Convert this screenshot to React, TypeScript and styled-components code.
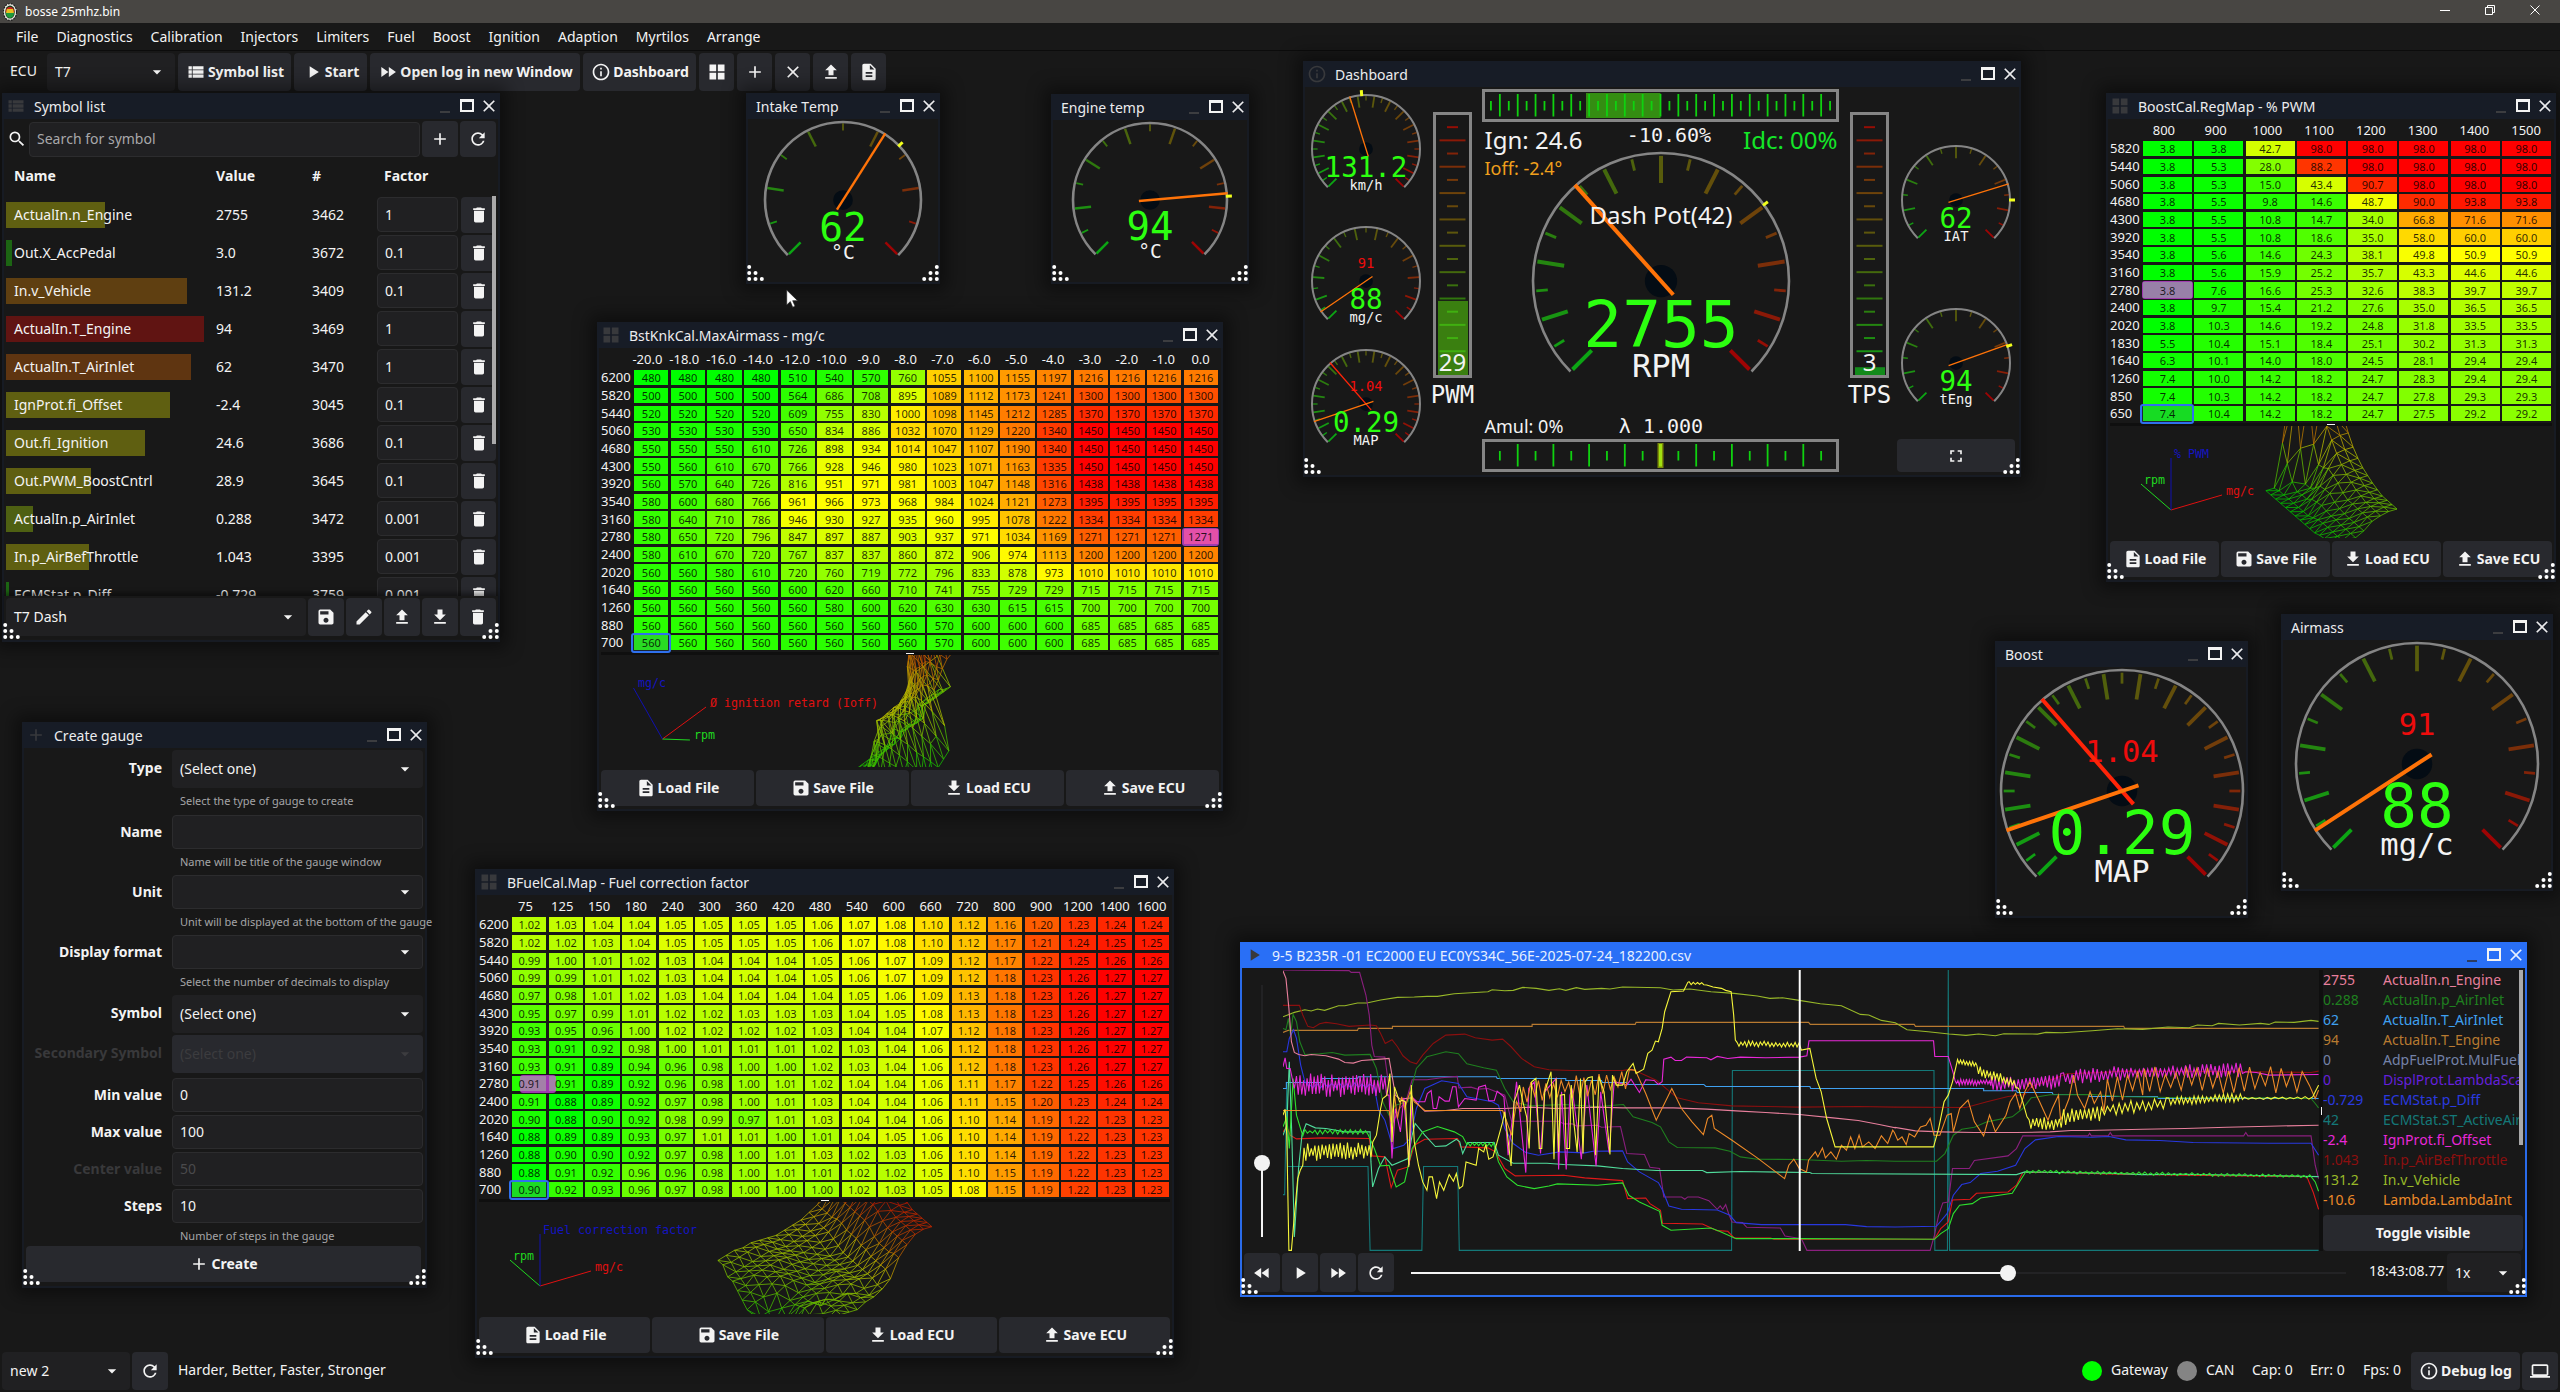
import React from 'react';
import styled, { createGlobalStyle, css } from 'styled-components';
import {
  MdAdd, MdArrowDropDown, MdClose, MdDelete, MdDescription, MdDownload, MdEdit,
  MdFastForward, MdFastRewind, MdFullscreen, MdInfoOutline, MdLaptop, MdPlayArrow,
  MdRefresh, MdSave, MdSearch, MdUpload, MdViewList,
} from 'react-icons/md';

const SANS = '"Noto Sans", "Open Sans", sans-serif';
const MONO = '"DejaVu Sans Mono", "Liberation Mono", monospace';

const Global = createGlobalStyle`
  * { box-sizing: border-box; }
  html, body { margin: 0; padding: 0; background: #181818; overflow: hidden; }
  body { font-family: ${SANS}; font-size: 14px; line-height: 1; color: #f3f3f3; font-kerning: none; }
  svg { display: block; flex: none; }
`;

/* ---------- shell ---------- */

const Page = styled.div`
  width: 2560px;
  height: 1392px;
  display: flex;
  flex-direction: column;
  background: #181818;
  overflow: hidden;
  white-space: nowrap;
`;

const OsBar = styled.header`
  height: 23px;
  flex: none;
  display: flex;
  align-items: center;
  padding: 0 19px 0 3px;
  background: #484643;
  font-size: 12px;
  color: #fff;
`;
const OsTitle = styled.span`
  margin-left: 8px;
  flex: 1;
`;
const OsButtons = styled.div`
  display: flex;
  gap: 33px;
  margin-top: -3px;
`;

const MenuBar = styled.nav`
  height: 28px;
  flex: none;
  display: flex;
  align-items: center;
  gap: 18px;
  padding: 0 16px;
  border-bottom: 1px solid #0c0c0c;
`;

const ToolBar = styled.div`
  height: 41px;
  flex: none;
  display: flex;
  align-items: center;
  gap: 3px;
  padding: 0 10px;
`;
const ToolLabel = styled.span`
  width: 34px;
  padding-bottom: 2px;
`;

const Desktop = styled.main`
  position: relative;
  flex: 1;
`;

const StatusBar = styled.footer`
  height: 41px;
  flex: none;
  display: flex;
  align-items: center;
  gap: 2px;
  padding: 0 2px 2px;
`;
const StatusText = styled.span<{ $w?: number; $tight?: boolean }>`
  padding: 0 0 1px ${p => (p.$tight ? 7 : 8)}px;
  ${p => p.$w ? css`width: ${p.$w}px;` : ''}
`;
const Spacer = styled.div`
  flex: 1;
`;
const Lamp = styled.i<{ $on?: boolean }>`
  width: 20px;
  height: 20px;
  border-radius: 50%;
  background: ${p => (p.$on ? '#00ff00' : '#848484')};
`;

/* ---------- controls ---------- */

const Button = styled.button<{ $w?: number; $h?: number; $grow?: boolean }>`
  display: flex;
  align-items: center;
  justify-content: center;
  gap: 2px;
  ${p => (p.$grow ? 'flex: 1 1 0;' : `flex: none; width: ${p.$w ?? 36}px;`)}
  height: ${p => p.$h ?? 38}px;
  padding: 0;
  border: 0;
  border-radius: 4px;
  background: #28292e;
  color: #f3f3f3;
  font: 700 14px/1 ${SANS};
`;
const ToolButton = styled(Button)`
  padding-left: 1px;
`;

const SelectBox = styled.div<{ $w?: number; $h?: number; $disabled?: boolean }>`
  display: flex;
  align-items: center;
  justify-content: space-between;
  width: ${p => (p.$w ? `${p.$w}px` : '100%')};
  height: ${p => p.$h ?? 38}px;
  padding: 0 8px;
  border-radius: 4px;
  background: ${p => (p.$disabled ? '#28292e' : '#202022')};
  color: ${p => (p.$disabled ? '#3c3c3f' : '#f3f3f3')};
`;

const EntryBox = styled.div<{ $w?: number; $h?: number; $muted?: string }>`
  display: flex;
  align-items: center;
  justify-content: space-between;
  width: ${p => (p.$w ? `${p.$w}px` : '100%')};
  height: ${p => p.$h ?? 33}px;
  padding: 0 7px;
  border: 1px solid #2c2c2e;
  border-radius: 4px;
  background: #202022;
  color: ${p => p.$muted ?? '#f3f3f3'};
`;

const Select = ({ value, w, h, disabled }: { value: string; w?: number; h?: number; disabled?: boolean }) => (
  <SelectBox $w={w} $h={h} $disabled={disabled}>
    <span>{value}</span>
    <MdArrowDropDown size={20} />
  </SelectBox>
);

const GridIcon = ({ size = 20 }: { size?: number }) => (
  <svg width={size} height={size} viewBox="0 0 24 24" fill="currentColor">
    <path d="M3 3h8v8H3zM13 3h8v8h-8zM3 13h8v8H3zM13 13h8v8h-8z" />
  </svg>
);

/* ---------- inner windows ---------- */

const Frame = styled.section<{ $x: number; $y: number; $w: number; $h: number; $active?: boolean }>`
  position: absolute;
  left: ${p => p.$x}px;
  top: ${p => p.$y - 92}px;
  width: ${p => p.$w}px;
  height: ${p => p.$h}px;
  display: flex;
  flex-direction: column;
  border: 2px solid ${p => (p.$active ? '#2a6bea' : '#171b23')};
  border-top: 0;
  background: #181818;
  box-shadow: 0 0 16px 7px rgba(0, 0, 0, 0.42);
`;
const TitleBar = styled.div<{ $active?: boolean; $icon?: boolean }>`
  height: 26px;
  flex: none;
  display: flex;
  align-items: center;
  margin: 0 -2px;
  padding: 0 0 0 ${p => (p.$icon ? 3 : 10)}px;
  background: ${p => (p.$active ? '#296ff6' : '#171c26')};
  color: ${p => (p.$active ? '#e6efff' : '#ececee')};
`;
const TitleIcon = styled.span`
  width: 29px;
  padding-left: 1px;
  color: #38393c;
`;
const TitleText = styled.span`
  padding-top: 2px;
`;
const WinButtons = styled.div`
  margin-left: auto;
  display: flex;
  align-items: center;
  width: 65px;
`;
const MinMark = styled.i<{ $active?: boolean }>`
  width: 10px;
  height: 2px;
  margin: 11px 10px 0 5px;
  background: ${p => (p.$active ? '#2b3b60' : '#3c3d40')};
`;
const MaxMark = styled.i`
  width: 14px;
  height: 13px;
  margin: 0 5px 1px 0;
  border: 2px solid #f3f3f3;
  border-top-width: 3px;
`;
const Body = styled.div`
  flex: 1;
  min-height: 0;
  display: flex;
  flex-direction: column;
`;
const GripBox = styled.div<{ $side: 'left' | 'right' }>`
  position: absolute;
  bottom: 0;
  ${p => p.$side}: -1px;
  pointer-events: none;
`;

const Grip = ({ side }: { side: 'left' | 'right' }) => {
  const dots = [[0, 0], [0, 1], [1, 1], [0, 2], [1, 2], [2, 2]];
  return (
    <GripBox $side={side}>
      <svg width="18" height="18" viewBox="0 0 18 18" fill="#fff">
        {dots.map(([cx, cy]) => (
          <circle key={`${cx}${cy}`} cx={side === 'left' ? 2.2 + cx * 6.3 : 15.8 - cx * 6.3} cy={3 + cy * 6} r="2" />
        ))}
      </svg>
    </GripBox>
  );
};

type WinProps = {
  x: number; y: number; w: number; h: number; title: string;
  icon?: React.ReactNode; active?: boolean; children: React.ReactNode;
};
const Win = ({ x, y, w, h, title, icon, active, children }: WinProps) => (
  <Frame $x={x} $y={y} $w={w} $h={h} $active={active}>
    <TitleBar $active={active} $icon={!!icon}>
      {icon && <TitleIcon>{icon}</TitleIcon>}
      <TitleText>{title}</TitleText>
      <WinButtons>
        <MinMark $active={active} />
        <MaxMark />
        <MdClose size={20} />
      </WinButtons>
    </TitleBar>
    <Body>{children}</Body>
    <Grip side="left" />
    <Grip side="right" />
  </Frame>
);

/* ---------- symbol list ---------- */

const SearchRow = styled.div`
  display: flex;
  align-items: center;
  gap: 2px;
  padding: 2px 2px 0;
  height: 38px;
`;
const SearchIcon = styled.span`
  width: 21px;
  padding-left: 1px;
`;
const SymHead = styled.div`
  display: grid;
  grid-template-columns: 202px 96px 72px 1fr;
  padding-left: 10px;
  height: 38.5px;
  align-items: center;
  font-weight: 700;
`;
const SymRows = styled.div`
  position: relative;
  height: 400px;
  overflow: hidden;
  padding: 0 2px;
`;
const SymRow = styled.div`
  position: relative;
  display: grid;
  grid-template-columns: 202px 96px 65px 84px 35px;
  align-items: center;
  height: 38px;
  padding-left: 8px;
`;
const SymBar = styled.i<{ $w: number; $c: string }>`
  position: absolute;
  left: 0;
  top: 6.5px;
  height: 26px;
  width: ${p => p.$w}px;
  background: ${p => p.$c};
`;
const SymText = styled.span`
  position: relative;
`;
const ScrollThumb = styled.i<{ $h: number; $r: number }>`
  position: absolute;
  right: ${p => p.$r}px;
  top: 0;
  width: 4px;
  height: ${p => p.$h}px;
  background: #a9a9aa;
`;
const BottomRow = styled.div`
  display: flex;
  gap: 2px;
  padding: 2.5px 2px 0;
  box-shadow: 0 -3px 5px rgba(0, 0, 0, 0.45);
  position: relative;
`;

const SYMBOLS: [string, string, string, string, number, string][] = [
  ['ActualIn.n_Engine', '2755', '3462', '1', 99, '#5f5f11'],
  ['Out.X_AccPedal', '3.0', '3672', '0.1', 6, '#1c6513'],
  ['In.v_Vehicle', '131.2', '3409', '0.1', 181, '#5f3f11'],
  ['ActualIn.T_Engine', '94', '3469', '1', 198, '#601412'],
  ['ActualIn.T_AirInlet', '62', '3470', '1', 185, '#5f3511'],
  ['IgnProt.fi_Offset', '-2.4', '3045', '0.1', 164, '#5f5f11'],
  ['Out.fi_Ignition', '24.6', '3686', '0.1', 139, '#5f5f11'],
  ['Out.PWM_BoostCntrl', '28.9', '3645', '0.1', 85, '#5f5f11'],
  ['ActualIn.p_AirInlet', '0.288', '3472', '0.001', 27, '#4e6012'],
  ['In.p_AirBefThrottle', '1.043', '3395', '0.001', 83, '#5f5f11'],
  ['ECMStat.p_Diff', '-0.729', '3759', '0.001', 3, '#1c6513'],
];

const SymbolList = () => (
  <Win x={2} y={93} w={498} h={549} title="Symbol list" icon={<MdViewList size={20} />}>
    <SearchRow>
      <SearchIcon><MdSearch size={20} /></SearchIcon>
      <EntryBox $w={391} $muted="#a8a8aa" $h={35}>Search for symbol</EntryBox>
      <Button $h={36}><MdAdd size={20} /></Button>
      <Button $h={36}><MdRefresh size={20} /></Button>
    </SearchRow>
    <SymHead><span>Name</span><span>Value</span><span>#</span><span>Factor</span></SymHead>
    <SymRows>
      {SYMBOLS.map(([name, value, id, factor, w, c]) => (
        <SymRow key={name}>
          <SymBar $w={w} $c={c} />
          <SymText>{name}</SymText>
          <span>{value}</span>
          <span>{id}</span>
          <EntryBox $w={81} $h={35}>{factor}</EntryBox>
          <Button $w={35} $h={36}><MdDelete size={20} /></Button>
        </SymRow>
      ))}
      <ScrollThumb $h={248} $r={2} />
    </SymRows>
    <BottomRow>
      <Select value="T7 Dash" w={300} h={38} />
      <Button $h={38}><MdSave size={20} /></Button>
      <Button $h={38}><MdEdit size={20} /></Button>
      <Button $h={38}><MdUpload size={20} /></Button>
      <Button $h={38}><MdDownload size={20} /></Button>
      <Button $h={38}><MdDelete size={20} /></Button>
    </BottomRow>
  </Win>
);

/* ---------- create gauge ---------- */

const Form = styled.div`
  display: flex;
  flex-direction: column;
  padding: 2px 3px 0 2px;
`;
const FieldRow = styled.div<{ $h: number; $off?: boolean }>`
  display: grid;
  grid-template-columns: 146px 251px;
  height: ${p => p.$h}px;
  align-items: start;
  color: ${p => (p.$off ? '#39393b' : '#f3f3f3')};
`;
const FieldLabel = styled.label<{ $h: number }>`
  height: ${p => p.$h - 2}px;
  display: flex;
  align-items: center;
  justify-content: flex-end;
  padding-right: 10px;
  font-weight: 700;
`;
const Hint = styled.div`
  height: 24px;
  display: flex;
  align-items: center;
  padding: 0 0 0 8px;
  font-size: 11px;
  color: #a5a5a7;
`;
const CreateWrap = styled.div`
  display: flex;
  padding: 0 4px 0 2px;
`;

type Field = { label: string; kind: 'select' | 'combo' | 'entry'; value?: string; hint?: string; off?: boolean; row: number };
const FIELDS: Field[] = [
  { label: 'Type', kind: 'select', value: '(Select one)', hint: 'Select the type of gauge to create', row: 65 },
  { label: 'Name', kind: 'entry', hint: 'Name will be title of the gauge window', row: 60 },
  { label: 'Unit', kind: 'combo', hint: 'Unit will be displayed at the bottom of the gauge', row: 60 },
  { label: 'Display format', kind: 'combo', hint: 'Select the number of decimals to display', row: 60 },
  { label: 'Symbol', kind: 'select', value: '(Select one)', row: 40 },
  { label: 'Secondary Symbol', kind: 'select', value: '(Select one)', off: true, row: 43 },
  { label: 'Min value', kind: 'entry', value: '0', row: 37 },
  { label: 'Max value', kind: 'entry', value: '100', row: 37 },
  { label: 'Center value', kind: 'entry', value: '50', off: true, row: 37 },
  { label: 'Steps', kind: 'entry', value: '10', hint: 'Number of steps in the gauge', row: 57 },
];

const CreateGauge = () => (
  <Win x={22} y={722} w={405} h={566} title="Create gauge" icon={<MdAdd size={20} />}>
    <Form>
      {FIELDS.map(f => (
        <FieldRow key={f.label} $h={f.row} $off={f.off}>
          <FieldLabel $h={f.kind === 'select' ? 38 : 35}>{f.label}</FieldLabel>
          <div>
            {f.kind === 'select'
              ? <Select value={f.value ?? ''} disabled={f.off} />
              : (
                <EntryBox $h={34} $muted={f.off ? '#4a4a4c' : undefined}>
                  <span>{f.value}</span>
                  {f.kind === 'combo' && <MdArrowDropDown size={20} />}
                </EntryBox>
              )}
            {f.hint && <Hint>{f.hint}</Hint>}
          </div>
        </FieldRow>
      ))}
    </Form>
    <CreateWrap>
      <Button $grow $h={36}><MdAdd size={20} />Create</Button>
    </CreateWrap>
  </Win>
);

/* ---------- gauges ---------- */

const lerp = (a: number, b: number, t: number) => a + (b - a) * t;

const DIAL_STOPS: [number, number[]][] = [
  [0, [12, 165, 20]], [0.3, [48, 118, 14]], [0.5, [88, 92, 12]], [0.72, [112, 64, 10]], [0.85, [130, 35, 8]], [1, [158, 4, 4]],
];
const dialColor = (t: number) => {
  for (let i = 1; i < DIAL_STOPS.length; i++) {
    const [t1, c1] = DIAL_STOPS[i];
    const [t0, c0] = DIAL_STOPS[i - 1];
    if (t <= t1) {
      const k = (t - t0) / (t1 - t0);
      return `rgb(${c0.map((c, n) => Math.round(lerp(c, c1[n], k))).join(',')})`;
    }
  }
  return 'rgb(158,4,4)';
};

type DialProps = {
  r: number; steps: number; frac: number; value: string; unit: string;
  peak?: number; frac2?: number; value2?: string; needle?: number;
};

const DialSvg = styled.svg`
  overflow: visible;
  font-family: ${MONO};
  text-anchor: middle;
`;

const Dial = ({ r, steps, frac, value, unit, peak, frac2, value2, needle }: DialProps) => {
  const c = r + 3;
  const at = (f: number, rad: number) => {
    const a = ((f * 270 - 135) * Math.PI) / 180;
    return [c + Math.sin(a) * rad, c - Math.cos(a) * rad];
  };
  const line = (f: number, r0: number, r1: number) => {
    const [x1, y1] = at(f, r0);
    const [x2, y2] = at(f, r1);
    return { x1, y1, x2, y2 };
  };
  const [sx, sy] = at(0, r - 1);
  const [ex, ey] = at(1, r - 1);
  const nw = needle ?? (r > 100 ? 4 : r > 60 ? 2.4 : 1.3);
  return (
    <DialSvg width={c * 2} height={c * 2}>
      <circle cx={c} cy={c} r={r / 8} fill="#040c14" />
      {Array.from({ length: steps + 1 }, (_, i) => (
        <line
          key={i}
          {...line(i / steps, r * 0.97, i % 2 ? r * 0.88 : r * 0.76)}
          stroke={dialColor(i / steps)}
          strokeWidth={i % 2 ? r / 48 + 0.2 : r / 34 + 0.2}
        />
      ))}
      <path d={`M${sx} ${sy}A${r - 1} ${r - 1} 0 1 1 ${ex} ${ey}`} fill="none" stroke="#858585" strokeWidth={r > 70 ? 2.6 : 2} />
      {value2 && <text x={c} y={c - r * 0.24} fontSize={r / 4} fill="#ee0c0c">{value2}</text>}
      {frac2 !== undefined && <line {...line(frac2, -r / 7, r)} stroke="#ff2408" strokeWidth={nw} />}
      <line {...line(frac, -r / 7, r)} stroke="#ff7308" strokeWidth={nw} />
      {peak !== undefined && <line {...line(peak, r - 2, r + 4)} stroke="#f2ff1c" strokeWidth={3} />}
      <text x={c} y={c + r * 0.515} fontSize={r / 2} fill="#2cff10">{value}</text>
      <text x={c} y={c + r * 0.742} fontSize={r / 4} fill="#f3f3f3">{unit}</text>
    </DialSvg>
  );
};

const DialBody = styled.div`
  display: flex;
  justify-content: center;
  margin-top: -1px;
`;
const GaugeWin = ({ x, y, w, h, title, ...dial }: DialProps & { x: number; y: number; w: number; h: number; title: string }) => (
  <Win x={x} y={y} w={w} h={h} title={title}>
    <DialBody><Dial {...dial} /></DialBody>
  </Win>
);

/* ---------- dashboard ---------- */

const Dash = styled.div`
  display: flex;
  align-items: flex-start;
`;
const DialColumn = styled.div<{ $left: number }>`
  display: flex;
  flex-direction: column;
  margin-left: ${p => p.$left}px;
`;
const DialSlot = styled.div<{ $gap: number }>`
  margin-top: ${p => p.$gap}px;
`;
const BarColumn = styled.div<{ $left: number }>`
  margin: 25px 0 0 ${p => p.$left}px;
  width: 39px;
`;
const CenterColumn = styled.div<{ $left: number }>`
  width: 357px;
  margin: 2px 0 0 ${p => p.$left}px;
`;
const Stage = styled.div`
  position: relative;
  height: 317px;
  padding: 27px 0 0 46.5px;
`;
const Readout = styled.span<{ $x: number; $y: number; $size: number; $c?: string; $mono?: boolean; $anchor?: 'l' | 'c' | 'r' }>`
  position: absolute;
  left: ${p => p.$x}px;
  top: ${p => p.$y}px;
  font: 400 ${p => p.$size}px/1 ${p => (p.$mono ? MONO : SANS)};
  color: ${p => p.$c ?? '#f3f3f3'};
  transform: translateX(${p => (p.$anchor === 'c' ? '-50%' : p.$anchor === 'r' ? '-100%' : '0')});
`;

const HBar = ({ div, from, to, fill, mark }: { div: number; from: number; to: number; fill: string; mark?: string }) => (
  <svg width="357" height="33">
    <rect x={from} y="4" width={to - from} height="25" fill={fill} />
    {Array.from({ length: div - 1 }, (_, k) => {
      const i = k + 1;
      const x = (357 / div) * i;
      const long = i % 2 === 0;
      const mid = mark && i === div / 2;
      return (
        <line key={i} x1={x} x2={x} y1={long ? 5 : 12} y2={long ? 27.5 : 21.5}
          stroke={mid ? mark : '#0fd20f'} strokeWidth={mid ? 3 : 1.8} />
      );
    })}
    <rect x="1.5" y="1.5" width="354" height="30" fill="none" stroke="#858585" strokeWidth="3" />
  </svg>
);

const VBar = ({ frac, value, label, fill }: { frac: number; value: string; label: string; fill: string }) => {
  const top = 263 - frac * 260;
  return (
    <svg width="39" height="296" overflow="visible">
      <rect x="5" y={top} width="30" height={263 - top} fill={fill} />
      {Array.from({ length: 18 }, (_, k) => {
        const i = k + 1;
        const y = 2 + 13.18 * i;
        const half = i % 2 ? 5.5 : 13;
        const lit = y > top;
        return (
          <line key={i} x1={19.5 - half} x2={19.5 + half} y1={y} y2={y}
            stroke={lit ? '#40b010' : dialColor(1 - i / 20)} strokeWidth="2" />
        );
      })}
      <rect x="1.5" y="1.5" width="36" height="263" fill="none" stroke="#858585" strokeWidth="3" />
      <text x="19.5" y="259" fontFamily={SANS} fontSize="24" textAnchor="middle" fill="#f3f3f3">{value}</text>
      <text x="19.5" y="291" fontFamily={MONO} fontSize="24" textAnchor="middle" fill="#f3f3f3">{label}</text>
    </svg>
  );
};

const ExpandSlot = styled.div`
  margin: 18px 0 0 -1px;
`;

const Dashboard = () => (
  <Win x={1303} y={61} w={718} h={416} title="Dashboard" icon={<MdInfoOutline size={20} />}>
    <Dash>
      <DialColumn $left={3}>
        <DialSlot $gap={4}><Dial r={55} steps={30} frac={0.436} peak={0.483} value="131.2" unit="km/h" /></DialSlot>
        <DialSlot $gap={16}><Dial r={55} steps={22} frac={0.04} value="88" unit="mg/c" value2="91" /></DialSlot>
        <DialSlot $gap={7}><Dial r={55} steps={30} frac={0.097} frac2={0.348} value="0.29" unit="MAP" value2="1.04" /></DialSlot>
      </DialColumn>
      <BarColumn $left={9}><VBar frac={0.285} value="29" label="PWM" fill="#3a7f10" /></BarColumn>
      <CenterColumn $left={10}>
        <HBar div={40} from={104} to={178.5} fill="#348d12" />
        <Stage>
          <Dial r={129} steps={20} frac={0.345} peak={0.698} value="2755" unit="RPM" />
          <Readout $x={2.5} $y={6} $size={24}>Ign: 24.6</Readout>
          <Readout $x={2.5} $y={37} $size={18} $c="#f0a01c">Ioff: -2.4°</Readout>
          <Readout $x={187} $y={3} $size={20} $mono $anchor="c">-10.60%</Readout>
          <Readout $x={355.5} $y={6} $size={24} $c="#14e628" $anchor="r">Idc: 00%</Readout>
          <Readout $x={179} $y={81} $size={24} $anchor="c">Dash Pot(42)</Readout>
          <Readout $x={2.5} $y={295} $size={18}>Amul: 0%</Readout>
          <Readout $x={179} $y={294} $size={20} $mono $anchor="c">λ 1.000</Readout>
        </Stage>
        <HBar div={20} from={175.5} to={181.5} fill="#7c8c08" mark="#a0e010" />
      </CenterColumn>
      <BarColumn $left={11}><VBar frac={0.03} value="3" label="TPS" fill="#128a1a" /></BarColumn>
      <DialColumn $left={9}>
        <DialSlot $gap={55}><Dial r={55} steps={16} frac={0.77} peak={0.833} value="62" unit="IAT" /></DialSlot>
        <DialSlot $gap={47}><Dial r={55} steps={16} frac={0.76} peak={0.766} value="94" unit="tEng" /></DialSlot>
        <ExpandSlot><Button $w={118} $h={33}><MdFullscreen size={20} /></Button></ExpandSlot>
      </DialColumn>
    </Dash>
  </Win>
);

/* ---------- map windows ---------- */

const rows = (s: string) => s.trim().split('\n').map(l => l.trim().split(/\s+/));

const AIRMASS = rows(`
6200 480 480 480 480 510 540 570 760 1055 1100 1155 1197 1216 1216 1216 1216
5820 500 500 500 500 564 686 708 895 1089 1112 1173 1241 1300 1300 1300 1300
5440 520 520 520 520 609 755 830 1000 1098 1145 1212 1285 1370 1370 1370 1370
5060 530 530 530 530 650 834 886 1032 1070 1129 1220 1340 1450 1450 1450 1450
4680 550 550 550 610 726 898 934 1014 1047 1107 1190 1340 1450 1450 1450 1450
4300 550 560 610 670 766 928 946 980 1023 1071 1163 1335 1450 1450 1450 1450
3920 560 570 640 726 816 951 971 981 1003 1047 1148 1316 1438 1438 1438 1438
3540 580 600 680 766 961 966 973 968 984 1024 1121 1273 1395 1395 1395 1395
3160 580 640 710 786 946 930 927 935 960 995 1078 1222 1334 1334 1334 1334
2780 580 650 720 796 847 897 887 903 937 971 1034 1169 1271 1271 1271 1271
2400 580 610 670 720 767 837 837 860 872 906 974 1113 1200 1200 1200 1200
2020 560 560 580 610 720 760 719 772 796 833 878 973 1010 1010 1010 1010
1640 560 560 560 560 600 620 660 710 741 755 729 729 715 715 715 715
1260 560 560 560 560 560 580 600 620 630 630 615 615 700 700 700 700
880 560 560 560 560 560 560 560 560 570 600 600 600 685 685 685 685
700 560 560 560 560 560 560 560 560 570 600 600 600 685 685 685 685`);

const FUEL = rows(`
6200 1.02 1.03 1.04 1.04 1.05 1.05 1.05 1.05 1.06 1.07 1.08 1.10 1.12 1.16 1.20 1.23 1.24 1.24
5820 1.02 1.02 1.03 1.04 1.05 1.05 1.05 1.05 1.06 1.07 1.08 1.10 1.12 1.17 1.21 1.24 1.25 1.25
5440 0.99 1.00 1.01 1.02 1.03 1.04 1.04 1.04 1.05 1.06 1.07 1.09 1.12 1.17 1.22 1.25 1.26 1.26
5060 0.99 0.99 1.01 1.02 1.03 1.04 1.04 1.04 1.05 1.06 1.07 1.09 1.12 1.18 1.23 1.26 1.27 1.27
4680 0.97 0.98 1.01 1.02 1.03 1.04 1.04 1.04 1.04 1.05 1.06 1.09 1.13 1.18 1.23 1.26 1.27 1.27
4300 0.95 0.97 0.99 1.01 1.02 1.02 1.03 1.03 1.03 1.04 1.05 1.08 1.13 1.18 1.23 1.26 1.27 1.27
3920 0.93 0.95 0.96 1.00 1.02 1.02 1.02 1.02 1.03 1.04 1.04 1.07 1.12 1.18 1.23 1.26 1.27 1.27
3540 0.93 0.91 0.92 0.98 1.00 1.01 1.01 1.01 1.02 1.03 1.04 1.06 1.12 1.18 1.23 1.26 1.27 1.27
3160 0.93 0.91 0.89 0.94 0.96 0.98 1.00 1.00 1.02 1.03 1.04 1.06 1.12 1.18 1.23 1.26 1.27 1.27
2780 0.91 0.91 0.89 0.92 0.96 0.98 1.00 1.01 1.02 1.04 1.04 1.06 1.11 1.17 1.22 1.25 1.26 1.26
2400 0.91 0.88 0.89 0.92 0.97 0.98 1.00 1.01 1.03 1.04 1.04 1.06 1.11 1.15 1.20 1.23 1.24 1.24
2020 0.90 0.88 0.90 0.92 0.98 0.99 0.97 1.01 1.03 1.04 1.04 1.06 1.10 1.14 1.19 1.22 1.23 1.23
1640 0.88 0.89 0.89 0.93 0.97 1.01 1.01 1.00 1.01 1.04 1.05 1.06 1.10 1.14 1.19 1.22 1.23 1.23
1260 0.88 0.90 0.90 0.92 0.97 0.98 1.00 1.01 1.03 1.02 1.03 1.06 1.10 1.14 1.19 1.22 1.23 1.23
880 0.88 0.91 0.92 0.96 0.96 0.98 1.00 1.01 1.01 1.02 1.02 1.05 1.10 1.15 1.19 1.22 1.23 1.23
700 0.90 0.92 0.93 0.96 0.97 0.98 1.00 1.00 1.00 1.02 1.03 1.05 1.08 1.15 1.19 1.22 1.23 1.23`);

const BOOST = rows(`
5820 3.8 3.8 42.7 98.0 98.0 98.0 98.0 98.0
5440 3.8 5.3 28.0 88.2 98.0 98.0 98.0 98.0
5060 3.8 5.3 15.0 43.4 90.7 98.0 98.0 98.0
4680 3.8 5.5 9.8 14.6 48.7 90.0 93.8 93.8
4300 3.8 5.5 10.8 14.7 34.0 66.8 71.6 71.6
3920 3.8 5.5 10.8 18.6 35.0 58.0 60.0 60.0
3540 3.8 5.6 14.6 24.3 38.1 49.8 50.9 50.9
3160 3.8 5.6 15.9 25.2 35.7 43.3 44.6 44.6
2780 3.8 7.6 16.6 25.3 32.6 38.3 39.7 39.7
2400 3.8 9.7 15.4 21.2 27.6 35.0 36.5 36.5
2020 3.8 10.3 14.6 19.2 24.8 31.8 33.5 33.5
1830 5.5 10.4 15.1 18.4 25.1 30.2 31.3 31.3
1640 6.3 10.1 14.0 18.0 24.5 28.1 29.4 29.4
1260 7.4 10.0 14.2 18.2 24.7 28.3 29.4 29.4
850 7.4 10.3 14.2 18.2 24.7 27.8 29.3 29.3
650 7.4 10.4 14.2 18.2 24.7 27.5 29.2 29.2`);

const heat = (z: number, k = 1) => {
  const r = z < 0.5 ? z * 2 * 255 : 255;
  const g = z < 0.5 ? 255 : (1 - z) * 2 * 255;
  return `rgb(${Math.round(r * k)},${Math.round(g * k)},0)`;
};

const GRID_H = 282.6;

const MapBody = styled.div`
  display: flex;
  flex-direction: column;
  padding: 0 2px;
`;
const AxisRow = styled.div<{ $n: number }>`
  display: grid;
  grid-template-columns: repeat(${p => p.$n}, 1fr);
  height: 21px;
  padding: 1px 0 0 28px;
  align-items: center;
  text-align: center;
  font-size: 13px;
`;
const CellGrid = styled.div`
  position: relative;
  display: flex;
  flex-direction: column;
  height: ${GRID_H}px;
`;
const CellRow = styled.div<{ $n: number }>`
  flex: 1;
  display: grid;
  grid-template-columns: 32px repeat(${p => p.$n}, 1fr);
  align-items: stretch;
`;
const RowHead = styled.span`
  display: flex;
  align-items: center;
  font-size: 13px;
`;
const Cell = styled.span`
  margin: 1.2px;
  display: flex;
  align-items: center;
  justify-content: center;
  font-size: 11px;
  color: rgba(0, 0, 0, 0.82);
`;
const CellText = styled.span`
  position: relative;
  z-index: 2;
`;
const Overlay = styled.i`
  position: absolute;
  z-index: 1;
  border-radius: 3px;
`;
const LiveMark = styled(Overlay)`
  background: rgba(216, 74, 240, 0.7);
`;
const FocusMark = styled(Overlay)`
  border: 2.5px solid #2f70ee;
  background: rgba(40, 90, 160, 0.22);
`;
const Splitter = styled.div`
  height: 3.4px;
  display: flex;
  align-items: center;
  justify-content: center;
  background: #0f0f0f;
`;
const SplitHandle = styled.i`
  width: 8px;
  height: 1px;
  background: #f3f3f3;
`;
const MapButtons = styled.div`
  display: flex;
  gap: 2px;
  margin-top: 3px;
`;

type Vec = [number, number];
type MapProps = {
  x: number; y: number; w: number; title: string; axis: string[]; data: string[][]; min: number; max: number;
  live: Vec; origin: Vec; ax: Vec; ay: Vec; az: Vec; tripod: Vec;
  names: { text: string; dx: number; dy: number; c: string }[];
};

const Mesh = ({ p, width }: { p: MapProps; width: number }) => {
  const n = p.data.length;
  const t = 0.1625;
  const pt = (c: number, r: number): [number, number, number] => {
    const z = (parseFloat(p.data[n - 1 - r][c + 1]) - p.min) / (p.max - p.min);
    return [
      p.origin[0] + t * c * p.ax[0] + t * r * p.ay[0] + 1.99 * z * p.az[0],
      p.origin[1] + t * c * p.ax[1] + t * r * p.ay[1] + 1.99 * z * p.az[1],
      z,
    ];
  };
  const cols = p.axis.length;
  const segs: React.ReactNode[] = [];
  const seg = (a: number[], b: number[], key: string) => segs.push(
    <line key={key} x1={a[0]} y1={a[1]} x2={b[0]} y2={b[1]} stroke={heat((a[2] + b[2]) / 2, 0.72)} />,
  );
  for (let r = 0; r < n; r++) {
    for (let c = 0; c < cols; c++) {
      const a = pt(c, r);
      if (c < cols - 1) seg(a, pt(c + 1, r), `h${c}-${r}`);
      if (r < n - 1) seg(a, pt(c, r + 1), `v${c}-${r}`);
      if (c < cols - 1 && r < n - 1) seg(pt(c + 1, r), pt(c, r + 1), `d${c}-${r}`);
    }
  }
  const [ox, oy] = p.tripod;
  const arms: [Vec, string][] = [[p.ax, '#e01010'], [p.ay, '#20d820'], [p.az, '#1010b0']];
  return (
    <svg width={width} height="112" fontFamily={MONO} fontSize="11.63">
      <g strokeWidth="0.8">{segs}</g>
      {arms.map(([v, c]) => <line key={c} x1={ox} y1={oy} x2={ox + v[0]} y2={oy + v[1]} stroke={c} />)}
      {p.names.map(l => <text key={l.text} x={l.dx} y={l.dy} fill={l.c}>{l.text}</text>)}
    </svg>
  );
};

const MapWin = (p: MapProps) => {
  const n = p.axis.length;
  const inner = p.w - 8;
  const cw = (inner - 32) / n;
  const ch = GRID_H / 16;
  return (
    <Win x={p.x} y={p.y} w={p.w} h={489} title={p.title} icon={<GridIcon />}>
      <MapBody>
        <AxisRow $n={n}>{p.axis.map(a => <span key={a}>{a}</span>)}</AxisRow>
        <CellGrid>
          {p.data.map(([head, ...cells]) => (
            <CellRow key={head} $n={n}>
              <RowHead>{head}</RowHead>
              {cells.map((v, i) => (
                <Cell key={i} style={{ background: heat((parseFloat(v) - p.min) / (p.max - p.min)) }}>
                  <CellText>{v}</CellText>
                </Cell>
              ))}
            </CellRow>
          ))}
          <LiveMark style={{ left: 32 + p.live[0] * cw, top: p.live[1] * ch, width: cw, height: ch }} />
          <FocusMark style={{ left: 30, top: 15 * ch - 1, width: cw + 3, height: ch + 2 }} />
        </CellGrid>
        <Splitter><SplitHandle /></Splitter>
        <Mesh p={p} width={inner} />
        <MapButtons>
          <Button $grow $h={36}><MdDescription size={20} />Load File</Button>
          <Button $grow $h={36}><MdSave size={20} />Save File</Button>
          <Button $grow $h={36}><MdDownload size={20} />Load ECU</Button>
          <Button $grow $h={36}><MdUpload size={20} />Save ECU</Button>
        </MapButtons>
      </MapBody>
    </Win>
  );
};

const RED = '#e01010';
const GREEN = '#20d820';
const BLUE = '#1414c0';

/* ---------- log player ---------- */

type Pt = [number, number];
type Piece = Pt[] | { x0: number; x1: number; y0: number; y1: number; amp: number; step: number };

/* abscissa of the second half of the recording */
const S = 1556;
const late = (pts: Pt[]): Pt[] => pts.map(([x, y]) => [x + S, y]);
const hash = (n: number) => {
  const s = Math.sin(n * 127.1) * 43758.5453;
  return s - Math.floor(s);
};
const trace = (pieces: Piece[]) => {
  const out: string[] = [];
  pieces.forEach((pc, k) => {
    if (Array.isArray(pc)) pc.forEach(([x, y]) => out.push(`${x},${y}`));
    else {
      let i = 0;
      for (let x = pc.x0; x <= pc.x1; x += pc.step, i++) {
        const m = lerp(pc.y0, pc.y1, (x - pc.x0) / (pc.x1 - pc.x0));
        const y = m + (i % 2 ? 1 : -1) * pc.amp * (0.35 + 0.65 * hash(i + k * 31 + pc.x0));
        out.push(`${x.toFixed(1)},${y.toFixed(1)}`);
      }
    }
  });
  return out.join(' ');
};

const TRACES: { c: string; d: Piece[] }[] = [
  { c: '#147878', d: [[[113, 778], [117, 778], [122, 440], [124, 694], [315, 694], [320, 945], [443, 945], [447, 694], [528, 694], [532, 945], [1179, 945], [1181, 406]], late([[104, 406], [106, 945], [136, 945], [138, 105], [139, 560], [141, 945], [1018, 945]])] },
  { c: '#b87a30', d: [[[113, 292], [125, 286], [290, 286], [292, 280], [373, 280], [373, 274], [705, 274], [705, 268], [950, 268], [952, 262], [1362, 262], [1366, 268]], late([[57, 268], [60, 274], [555, 274], [557, 280], [1018, 280]])] },
  { c: '#98b828', d: [[[113, 245], [140, 232], [165, 224], [180, 228], [195, 222], [212, 226], [245, 212], [260, 212], [290, 204], [312, 204], [345, 195], [385, 187], [425, 186], [455, 184], [480, 184], [520, 176], [600, 170], [610, 164], [640, 167], [660, 166], [683, 157], [715, 160], [745, 166], [770, 161], [785, 166], [810, 158], [830, 163], [870, 160], [890, 162], [920, 156], [1010, 158], [1040, 165], [1080, 162], [1130, 170], [1185, 175], [1240, 183], [1270, 190], [1300, 188], [1340, 196], [1390, 206], [1440, 212], [1485, 238], [1505, 240], [1535, 256], [1568, 263]], late([[40, 284], [90, 290], [140, 297], [180, 301], [210, 297], [250, 302], [270, 296], [350, 297], [370, 292], [410, 293], [480, 287], [540, 281], [600, 283], [660, 276], [710, 278], [730, 270], [765, 272], [780, 265], [830, 270], [880, 265], [900, 268], [915, 261], [960, 262], [1000, 256], [1018, 259]])] },
  { c: '#8b0f0f', d: [[[113, 211], [152, 211], [160, 240], [172, 274], [185, 278], [200, 266], [215, 262], [240, 266], [270, 274], [320, 270], [335, 272], [345, 295], [356, 325], [372, 314], [385, 335], [398, 362], [415, 380], [430, 386], [445, 360], [470, 325], [500, 300], [545, 297], [570, 308], [610, 315], [635, 312], [655, 335], [680, 370], [710, 395], [745, 404], [800, 406], [920, 406], [940, 402], [965, 415], [1000, 435], [1025, 462], [1050, 488], [1100, 503], [1180, 512], [1260, 514], [1340, 516], [1480, 514], [1568, 516]], late([[180, 517], [230, 500], [280, 484], [320, 478], [335, 455], [380, 435], [420, 416], [500, 412], [550, 408], [860, 410], [1000, 412], [1018, 408]])] },
  { c: '#3fa0f0', d: [[[113, 460], [121, 460], [121, 442], [205, 442], [205, 430], [290, 430], [292, 425], [620, 425], [622, 430], [785, 430], [785, 436], [870, 436], [872, 442], [930, 442], [932, 448], [1113, 448], [1118, 454], [1365, 454], [1367, 460]], late([[222, 460], [222, 467], [300, 467], [302, 472], [385, 472], [387, 478], [472, 478], [474, 484], [635, 484], [637, 490], [1018, 490]])] },
  { c: '#8a1f7e', d: [[[113, 105], [270, 107], [275, 112], [295, 112], [310, 180], [318, 240], [324, 330], [330, 364], [355, 366], [362, 430], [375, 560], [390, 520], [405, 500], [420, 434], [455, 434], [490, 428], [527, 424], [531, 458], [560, 456], [575, 462], [600, 460], [640, 480], [656, 558], [770, 558], [780, 566], [800, 566], [810, 572], [860, 570], [870, 576], [915, 574], [930, 655], [972, 658], [985, 696], [1008, 700], [1018, 785], [1060, 785], [1068, 792], [1075, 785], [1100, 785], [1125, 796], [1145, 822], [1152, 812], [1158, 822], [1165, 808], [1172, 835], [1180, 860], [1205, 862], [1215, 876], [1295, 878], [1306, 902], [1345, 910], [1358, 945]], late([[95, 945], [105, 900], [115, 840], [125, 803], [138, 800], [148, 700], [188, 700], [200, 676], [280, 662], [300, 640], [315, 602], [470, 602], [474, 594], [478, 602], [518, 602], [523, 592], [528, 602], [840, 602], [845, 592], [850, 602], [1000, 602], [1010, 690], [1018, 730]])] },
  { c: '#1f7f1f', d: [[[113, 280], [120, 284], [126, 250], [131, 300], [137, 238], [145, 260], [153, 320], [165, 358], [200, 356], [230, 352], [260, 360], [320, 358], [335, 400], [350, 500], [365, 540], [380, 510], [410, 500], [430, 400], [455, 365], [500, 350], [530, 356], [550, 386], [590, 398], [620, 405], [640, 460], [660, 500], [700, 512], [780, 508], [860, 514], [922, 508], [945, 545], [990, 562], [1010, 575], [1030, 620], [1050, 637], [1140, 638], [1175, 648], [1200, 665], [1240, 672], [1340, 673], [1440, 678], [1500, 676], [1568, 678]], late([[110, 678], [130, 655], [150, 600], [170, 582], [200, 576], [230, 560], [290, 545], [315, 520], [335, 488], [380, 479], [480, 478], [560, 485], [700, 488], [900, 488], [1000, 490], [1010, 505], [1018, 518]])] },
  { c: '#2838e0', d: [[[113, 350], [122, 350], [128, 310], [138, 284], [145, 310], [155, 390], [165, 440], [175, 455]], { x0: 175, x1: 325, y0: 452, y1: 450, amp: 8, step: 9 }, [[330, 455], [340, 525], [355, 555], [375, 640], [400, 630], [415, 610], [430, 520], [450, 460], [490, 437], [530, 445], [550, 485], [610, 500], [625, 510], [640, 580], [660, 625], [690, 652], [720, 660], [770, 650], [830, 653], [850, 648], [920, 647], [932, 680], [960, 710], [1005, 742], [1015, 765], [1030, 812], [1060, 822], [1145, 824], [1175, 840], [1190, 862], [1250, 868], [1450, 868], [1500, 874], [1568, 875]], late([[110, 873], [135, 835], [150, 780], [170, 748], [190, 742], [215, 715], [255, 708], [298, 690], [320, 640], [345, 614], [400, 604], [480, 606], [520, 604], [560, 614], [640, 616], [720, 622], [900, 624], [1000, 624], [1018, 660]])] },
  { c: '#e01818', d: [[[113, 590], [122, 575], [130, 600], [145, 611], [205, 608], [318, 610], [325, 662], [355, 665], [370, 757], [385, 705], [410, 695], [425, 630], [450, 612], [528, 610], [535, 635], [600, 638], [618, 650], [640, 700], [665, 722], [780, 720], [830, 728], [920, 736], [932, 790], [975, 788], [985, 805], [1010, 825], [1015, 864], [1110, 866], [1145, 886], [1170, 888], [1185, 908], [1272, 908], [1280, 912]], late([[105, 912], [120, 880], [138, 860], [148, 794], [190, 792], [205, 774], [280, 770], [300, 750], [315, 712], [400, 712], [520, 716], [700, 720], [990, 724], [1005, 770], [1018, 822]])] },
  { c: '#50dc9c', d: [[[113, 600], [122, 570], [128, 380], [134, 600], [140, 905], [150, 700], [158, 600], [168, 566], [190, 578], [215, 580], [260, 590], [320, 590], [322, 680], [326, 755], [340, 700], [355, 665], [372, 690], [410, 670], [420, 600], [427, 565], [450, 600], [475, 634], [500, 632], [525, 612], [533, 620], [540, 655], [552, 622], [615, 622], [625, 660], [660, 684], [740, 684], [780, 688], [860, 692], [920, 700], [1000, 706], [1110, 706], [1120, 712], [1200, 709], [1365, 712], [1370, 715]], late([[300, 718], [320, 710], [400, 712], [520, 714], [600, 718], [700, 717], [1018, 724]])] },
  { c: '#2ee02e', d: [[[113, 575], [122, 545], [128, 640], [137, 430], [145, 540], [160, 602]], { x0: 165, x1: 320, y0: 590, y1: 590, amp: 8, step: 6 }, [[330, 640], [345, 692], [365, 690], [382, 755], [402, 740], [420, 640], [445, 590], [480, 574], [520, 590], [540, 604], [550, 628]], { x0: 553, x1: 615, y0: 628, y1: 628, amp: 6, step: 5 }, [[625, 680], [645, 725], [670, 750], [710, 760], [745, 752], [765, 746], [860, 750], [920, 743], [935, 780], [960, 800], [1008, 828], [1014, 870], [1035, 885], [1130, 878], [1150, 888], [1190, 910], [1340, 910], [1568, 911]], late([[105, 912], [120, 895], [138, 880], [150, 835], [165, 810], [195, 805], [215, 788], [290, 774], [320, 714]]), { x0: S + 325, x1: S + 1000, y0: 709, y1: 723, amp: 5, step: 7 }, late([[1010, 740], [1018, 768]])] },
  { c: '#e87f9c', d: [[[113, 108], [120, 130], [127, 220], [133, 320], [140, 352], [150, 358], [165, 362], [180, 358], [215, 362], [245, 372], [260, 382], [280, 384], [300, 376], [345, 372], [365, 370], [372, 420], [380, 480], [392, 492], [420, 488], [440, 515], [450, 528], [500, 526], [540, 520], [640, 520], [700, 516], [760, 520], [860, 516], [920, 518], [1040, 518], [1120, 522], [1200, 528], [1260, 532], [1340, 538], [1420, 548], [1480, 556], [1530, 568], [1568, 578]], late([[12, 577], [60, 587], [120, 590], [200, 592], [300, 592], [380, 590], [430, 586], [470, 586], [600, 582], [700, 580], [800, 576], [900, 573], [1018, 570]])] },
  { c: '#e828d8', d: [[[113, 395], [118, 368], [122, 400], [130, 400], [140, 460]], { x0: 145, x1: 360, y0: 452, y1: 448, amp: 36, step: 4.2 }, [[365, 480], [372, 670], [380, 520], [392, 590], [400, 488], [413, 690], [420, 486], [432, 500], [450, 500], [456, 475], [465, 466], [470, 520], [478, 520], [484, 485], [498, 498], [508, 498], [516, 455], [524, 455], [530, 515], [545, 490], [572, 495], [578, 456], [594, 450], [602, 497], [615, 497], [622, 468], [638, 485], [648, 660], [668, 440], [690, 712], [697, 460], [710, 440], [725, 655], [735, 470], [762, 430], [768, 703], [775, 470], [786, 703], [795, 480], [800, 460], [822, 672], [835, 450], [857, 693], [868, 470], [888, 652], [900, 440], [930, 450], [940, 432], [960, 472], [975, 434], [995, 436], [1005, 448], [1014, 440], [1018, 372], [1035, 366], [1045, 376], [1060, 376], [1072, 366], [1120, 368], [1130, 374], [1145, 364], [1170, 370], [1200, 366], [1260, 368], [1340, 366], [1358, 362], [1363, 317]], late([[103, 317], [106, 364], [138, 364], [150, 415]]), { x0: S + 154, x1: S + 240, y0: 440, y1: 442, amp: 10, step: 3.4 }, { x0: S + 240, x1: S + 410, y0: 448, y1: 440, amp: 26, step: 4.6 }, { x0: S + 412, x1: S + 500, y0: 430, y1: 420, amp: 24, step: 5 }, { x0: S + 502, x1: S + 840, y0: 416, y1: 404, amp: 22, step: 5 }, late([[845, 410], [870, 412], [900, 420], [1018, 418]])] },
  { c: '#ee8a28', d: [[[113, 526], [365, 526], [370, 560], [378, 480], [385, 550], [395, 485], [402, 520], [415, 470], [425, 500], [440, 515], [450, 526], [635, 526], [645, 560], [656, 600], [668, 500], [678, 530]], { x0: 684, x1: 940, y0: 470, y1: 436, amp: 36, step: 9 }, [[950, 405], [975, 475], [1000, 555], [1037, 460], [1060, 520], [1085, 560], [1112, 598], [1122, 550], [1132, 540], [1138, 580], [1180, 615], [1240, 668], [1305, 730], [1315, 690], [1327, 672], [1340, 700], [1357, 710], [1362, 675], [1378, 650], [1384, 665], [1395, 638], [1402, 668], [1415, 650], [1428, 672], [1440, 630], [1452, 645], [1462, 605], [1472, 640], [1482, 600], [1490, 635], [1505, 620], [1520, 640], [1535, 602], [1550, 625], [1562, 585]], late([[10, 592], [18, 615], [28, 605], [38, 628], [45, 595], [58, 605], [72, 575], [85, 570], [95, 550], [104, 600], [118, 600], [135, 540], [145, 535], [150, 590], [165, 520], [185, 495], [200, 560], [222, 602], [236, 540], [250, 590], [275, 540], [285, 500], [298, 475], [308, 520], [320, 470], [332, 440], [355, 500], [375, 555], [385, 520], [400, 480], [405, 555], [425, 490], [436, 420], [445, 480], [462, 520], [475, 470], [485, 505], [500, 470], [508, 530]]), { x0: S + 516, x1: S + 600, y0: 470, y1: 440, amp: 42, step: 12 }, { x0: S + 604, x1: S + 990, y0: 434, y1: 434, amp: 40, step: 12.5 }, late([[996, 450], [1010, 490], [1018, 465]])] },
  { c: '#f6f63a', d: [[[113, 540], [118, 522], [122, 600], [127, 945], [133, 945], [138, 870], [148, 730], [154, 705], [160, 690]], { x0: 163, x1: 330, y0: 650, y1: 645, amp: 28, step: 4.3 }, [[335, 600], [345, 520], [350, 490], [360, 480], [367, 415], [372, 620], [378, 455], [390, 500], [396, 495], [404, 500], [412, 695], [418, 450], [425, 620], [435, 690], [445, 740], [455, 765], [460, 725], [468, 725], [478, 790], [485, 740], [495, 765], [508, 718], [518, 738], [525, 715], [532, 760], [540, 752], [548, 680], [572, 690], [578, 640], [590, 650], [595, 628], [602, 672], [612, 665], [622, 620], [635, 560], [640, 530], [655, 692], [662, 500], [668, 480], [675, 450], [682, 495], [692, 545], [698, 640], [704, 440], [714, 430], [722, 640], [728, 640], [735, 470], [750, 410], [757, 672], [762, 430], [768, 650], [772, 480], [782, 478], [786, 640], [794, 640], [798, 450], [804, 560], [812, 650], [820, 430], [826, 655], [831, 440], [838, 428], [848, 425], [856, 660], [864, 425], [876, 470], [890, 658], [896, 420], [905, 450], [920, 450], [930, 410], [945, 385], [952, 415], [970, 402], [980, 355], [990, 345], [998, 318], [1005, 320], [1014, 280], [1020, 230], [1035, 170], [1065, 168], [1075, 142]], { x0: 1078, x1: 1115, y0: 145, y1: 145, amp: 5, step: 5 }, [[1120, 150], [1135, 156], [1155, 160], [1165, 166], [1178, 170], [1184, 240], [1188, 315]], { x0: 1192, x1: 1340, y0: 325, y1: 330, amp: 9, step: 4.6 }, [[1345, 345], [1365, 340], [1380, 430], [1392, 470], [1405, 550], [1425, 635]], late([[103, 635], [115, 580], [128, 500], [138, 480], [148, 440], [158, 385]]), { x0: S + 160, x1: S + 205, y0: 380, y1: 388, amp: 10, step: 3.6 }, { x0: S + 206, x1: S + 300, y0: 405, y1: 448, amp: 16, step: 4 }, late([[305, 460], [315, 500], [325, 545]]), { x0: S + 330, x1: S + 410, y0: 565, y1: 565, amp: 20, step: 4.5 }, { x0: S + 412, x1: S + 500, y0: 548, y1: 532, amp: 26, step: 5 }, { x0: S + 502, x1: S + 660, y0: 524, y1: 504, amp: 20, step: 7 }, { x0: S + 662, x1: S + 840, y0: 498, y1: 486, amp: 14, step: 5 }, { x0: S + 842, x1: S + 1005, y0: 490, y1: 488, amp: 4, step: 9 }, late([[1010, 470], [1018, 450]])] },
];

const LEGEND: [string, string, string][] = [
  ['2755', 'ActualIn.n_Engine', '#e87f9c'],
  ['0.288', 'ActualIn.p_AirInlet', '#1f7f1f'],
  ['62', 'ActualIn.T_AirInlet', '#3fa0f0'],
  ['94', 'ActualIn.T_Engine', '#b87a30'],
  ['0', 'AdpFuelProt.MulFuelAdapt', '#7482a8'],
  ['0', 'DisplProt.LambdaScanner', '#6420dc'],
  ['-0.729', 'ECMStat.p_Diff', '#2a3ae0'],
  ['42', 'ECMStat.ST_ActiveAirDem', '#147878'],
  ['-2.4', 'IgnProt.fi_Offset', '#e828d8'],
  ['1.043', 'In.p_AirBefThrottle', '#8b0f0f'],
  ['131.2', 'In.v_Vehicle', '#98b828'],
  ['-10.6', 'Lambda.LambdaInt', '#ee8a28'],
];

const LogTop = styled.div`
  display: flex;
  height: 283px;
  padding-top: 2px;
`;
const VSlider = styled.div`
  width: 41px;
  padding: 15px 0 0 12px;
`;
const PlotBox = styled.div`
  width: 1036px;
  height: 281px;
`;
const LogSplit = styled.div`
  width: 4px;
  display: flex;
  align-items: center;
  justify-content: center;
  background: #0f0f0f;
`;
const SplitTick = styled.i`
  width: 1px;
  height: 8px;
  background: #f3f3f3;
`;
const LegendCol = styled.div`
  display: flex;
  flex-direction: column;
  justify-content: space-between;
  width: 200px;
`;
const LegendList = styled.div`
  position: relative;
  height: 242px;
  overflow: hidden;
`;
const LegendRow = styled.div<{ $c: string }>`
  display: grid;
  grid-template-columns: 60px 200px;
  align-items: center;
  height: 20px;
  color: ${p => p.$c};
`;
const Controls = styled.div`
  display: flex;
  align-items: center;
  gap: 2px;
  padding: 2px 2px 0;
`;
const SeekTrack = styled.div`
  width: 950px;
  flex: none;
  margin: 0 13px 0 8px;
`;
const Clock = styled.span`
  width: 76px;
  padding-bottom: 3px;
`;

const LogPlayer = () => (
  <Win x={1240} y={942} w={1287} h={355} active title="9-5 B235R -01 EC2000 EU EC0YS34C_56E-2025-07-24_182200.csv" icon={<MdPlayArrow size={20} />}>
    <LogTop>
      <VSlider>
        <svg width="20" height="256">
          <line x1="8" x2="8" y1="0" y2="180" stroke="#222224" strokeWidth="2" />
          <line x1="8" x2="8" y1="180" y2="252" stroke="#f3f3f3" strokeWidth="2" />
          <circle cx="8" cy="178" r="8" fill="#f3f3f3" />
        </svg>
      </VSlider>
      <PlotBox>
        <svg width="1036" height="281" viewBox="113 105 2462 842" preserveAspectRatio="none" fill="none">
          {TRACES.map((t, i) => (
            <polyline key={i} points={trace(t.d)} stroke={t.c} strokeWidth="1.1" vectorEffect="non-scaling-stroke" />
          ))}
          <line x1="1341" x2="1341" y1="105" y2="947" stroke="#fff" strokeWidth="2" vectorEffect="non-scaling-stroke" />
        </svg>
      </PlotBox>
      <LogSplit><SplitTick /></LogSplit>
      <LegendCol>
        <LegendList>
          {LEGEND.map(([v, name, c]) => (
            <LegendRow key={name} $c={c}><span>{v}</span><span>{name}</span></LegendRow>
          ))}
          <ScrollThumb $h={175} $r={0} />
        </LegendList>
        <Button $w={200} $h={36}>Toggle visible</Button>
      </LegendCol>
    </LogTop>
    <Controls>
      <Button $h={39}><MdFastRewind size={20} /></Button>
      <Button $h={39}><MdPlayArrow size={20} /></Button>
      <Button $h={39}><MdFastForward size={20} /></Button>
      <Button $h={39}><MdRefresh size={20} /></Button>
      <SeekTrack>
        <svg width="950" height="16">
          <line x1="7" x2="603" y1="8" y2="8" stroke="#f3f3f3" strokeWidth="2" />
          <line x1="603" x2="942" y1="8" y2="8" stroke="#232325" strokeWidth="2" />
          <circle cx="604" cy="8" r="8" fill="#f3f3f3" />
        </svg>
      </SeekTrack>
      <Clock>18:43:08.77</Clock>
      <Select value="1x" w={74} h={39} />
    </Controls>
  </Win>
);

/* ---------- misc drawings ---------- */

const Logo = () => (
  <svg width="14" height="18" viewBox="0 0 14 18">
    <ellipse cx="7" cy="9" rx="6.6" ry="8.4" fill="#e9e9e2" stroke="#1c1c1c" strokeWidth="1.2" strokeDasharray="2 1" />
    <ellipse cx="7" cy="9" rx="4.8" ry="6.6" fill="#1c3a1c" />
    <path d="M2.4 9a4.7 6.4 0 0 1 9.2 0z" fill="#c8281c" />
    <path d="M4 6h6l1 4-4 2-4-2z" fill="#e8c020" />
    <path d="M3 10h8a4 5 0 0 1-8 0z" fill="#1f9a3c" />
  </svg>
);

const Pointer = styled.div`
  position: absolute;
  left: 786px;
  top: 197px;
`;

const MENU = ['File', 'Diagnostics', 'Calibration', 'Injectors', 'Limiters', 'Fuel', 'Boost', 'Ignition', 'Adaption', 'Myrtilos', 'Arrange'];

const ISO = { ax: [51, -15] as Vec, ay: [-30, -26] as Vec, az: [0, -52] as Vec };

export default function App() {
  return (
    <Page>
      <Global />
      <OsBar>
        <Logo />
        <OsTitle>bosse 25mhz.bin</OsTitle>
        <OsButtons>
          <svg width="12" height="12" stroke="#fff" fill="none"><path d="M1 6.5h10" /></svg>
          <svg width="12" height="12" stroke="#fff" fill="none"><path d="M1.5 3.5h7v7h-7zM3.5 3.5v-2h7v7h-2" /></svg>
          <svg width="12" height="12" stroke="#fff" fill="none"><path d="M1.5 1.5l9 9M10.5 1.5l-9 9" /></svg>
        </OsButtons>
      </OsBar>
      <MenuBar>{MENU.map(m => <span key={m}>{m}</span>)}</MenuBar>
      <ToolBar>
        <ToolLabel>ECU</ToolLabel>
        <Select value="T7" w={128} />
        <ToolButton $w={113}><MdViewList size={20} />Symbol list</ToolButton>
        <ToolButton $w={73}><MdPlayArrow size={20} />Start</ToolButton>
        <ToolButton $w={210}><MdFastForward size={20} />Open log in new Window</ToolButton>
        <ToolButton $w={113}><MdInfoOutline size={20} />Dashboard</ToolButton>
        <Button $w={35}><GridIcon /></Button>
        <Button $w={35}><MdAdd size={20} /></Button>
        <Button $w={35}><MdClose size={20} /></Button>
        <Button $w={35}><MdUpload size={20} /></Button>
        <Button $w={35}><MdDescription size={20} /></Button>
      </ToolBar>
      <Desktop>
        <SymbolList />
        <GaugeWin x={746} y={93} w={194} h={191} title="Intake Temp" r={79} steps={10} frac={0.62} peak={0.67} value="62" unit="°C" />
        <GaugeWin x={1051} y={94} w={198} h={190} title="Engine temp" r={78} steps={14} frac={0.815} peak={0.823} value="94" unit="°C" />
        <Dashboard />
        <MapWin
          x={2106} y={93} w={450} title="BoostCal.RegMap - % PWM"
          axis={['800', '900', '1000', '1100', '1200', '1300', '1400', '1500']}
          data={BOOST} min={3.8} max={98} live={[0, 8]}
          origin={[229, 128]} {...ISO} tripod={[61, 84]}
          names={[
            { text: '% PWM', dx: 64, dy: 32, c: BLUE },
            { text: 'rpm', dx: 34, dy: 58, c: GREEN },
            { text: 'mg/c', dx: 116, dy: 69, c: RED },
          ]}
        />
        <MapWin
          x={597} y={322} w={626} title="BstKnkCal.MaxAirmass - mg/c"
          axis={['-20.0', '-18.0', '-16.0', '-14.0', '-12.0', '-10.0', '-9.0', '-8.0', '-7.0', '-6.0', '-5.0', '-4.0', '-3.0', '-2.0', '-1.0', '0.0']}
          data={AIRMASS} min={480} max={1450} live={[15, 9]}
          origin={[244, 134]} ax={[43.5, -32]} ay={[27.4, 1]} az={[-29, -51]} tripod={[61.5, 84]}
          names={[
            { text: 'mg/c', dx: 37, dy: 32, c: BLUE },
            { text: 'Ø ignition retard (Ioff)', dx: 109, dy: 52, c: RED },
            { text: 'rpm', dx: 93, dy: 84, c: GREEN },
          ]}
        />
        <MapWin
          x={475} y={869} w={699} title="BFuelCal.Map - Fuel correction factor"
          axis={['75', '125', '150', '180', '240', '300', '360', '420', '480', '540', '600', '660', '720', '800', '900', '1200', '1400', '1600']}
          data={FUEL} min={0.88} max={1.27} live={[0.24, 9]}
          origin={[312, 159]} {...ISO} tripod={[61, 84]}
          names={[
            { text: 'Fuel correction factor', dx: 64, dy: 32, c: BLUE },
            { text: 'rpm', dx: 34, dy: 58, c: GREEN },
            { text: 'mg/c', dx: 116, dy: 69, c: RED },
          ]}
        />
        <GaugeWin x={1995} y={641} w={253} h={277} title="Boost" r={122} steps={30} frac={0.097} frac2={0.348} value="0.29" unit="MAP" value2="1.04" />
        <GaugeWin x={2281} y={614} w={272} h={277} title="Airmass" r={122} steps={20} frac={0.044} value="88" unit="mg/c" value2="91" />
        <CreateGauge />
        <LogPlayer />
        <Pointer>
          <svg width="13" height="20" viewBox="0 0 13 20">
            <path d="M.7 1v15l3.6-3.4 2.4 5.6 2.4-1-2.4-5.5h5z" fill="#fff" stroke="#222" strokeWidth=".7" />
          </svg>
        </Pointer>
      </Desktop>
      <StatusBar>
        <Select value="new 2" w={128} />
        <Button><MdRefresh size={20} /></Button>
        <StatusText>Harder, Better, Faster, Stronger</StatusText>
        <Spacer />
        <Lamp $on />
        <StatusText $w={71} $tight>Gateway</StatusText>
        <Lamp />
        <StatusText $w={43} $tight>CAN</StatusText>
        <StatusText $w={56}>Cap: 0</StatusText>
        <StatusText $w={51}>Err: 0</StatusText>
        <StatusText $w={54}>Fps: 0</StatusText>
        <Button $w={109}><MdInfoOutline size={20} />Debug log</Button>
        <Button><MdLaptop size={20} /></Button>
      </StatusBar>
    </Page>
  );
}
